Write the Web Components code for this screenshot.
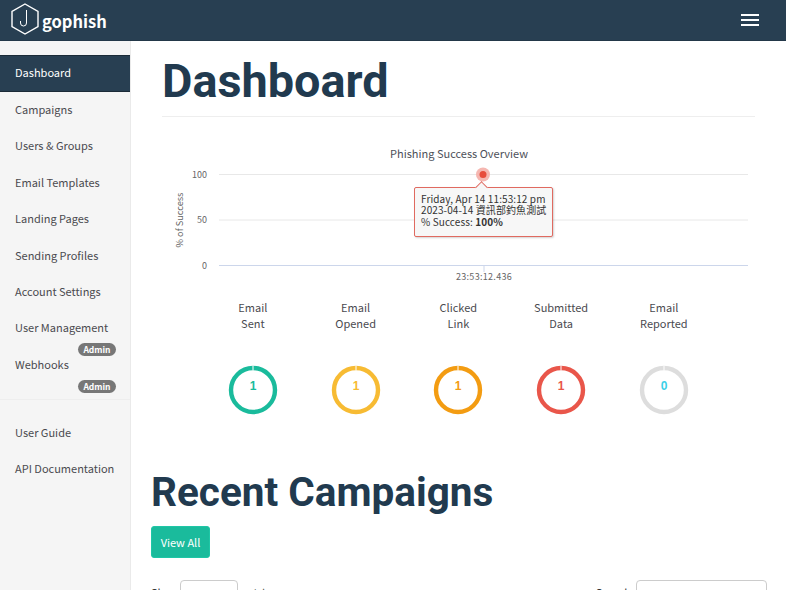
<!DOCTYPE html>
<html><head><meta charset="utf-8">
<style>
html,body{margin:0;padding:0;height:590px;overflow:hidden;background:#fff}
body{font-family:"Noto Sans CJK TC","Noto Sans",sans-serif;color:#333}
</style></head><body>
<gp-app></gp-app>
<script>
const def=(name,html)=>{customElements.define(name,class extends HTMLElement{
 connectedCallback(){ if(this.shadowRoot)return; const s=this.attachShadow({mode:'open'}); s.innerHTML=typeof html==='function'?html(this):html; }
});};
def('gp-topbar',`<style>
:host{display:flex;align-items:center;justify-content:space-between;height:41px;box-sizing:border-box;background:#283f52;border-bottom:1px solid #233849;padding:0 27px 0 11px;flex:none}
.brand{display:flex;align-items:center;gap:3px;color:#fff;font:700 16.5px "Noto Sans CJK TC","Noto Sans",sans-serif;}
.brand span{position:relative;top:1px}
.burger{display:flex;flex-direction:column;gap:3px}.burger i{display:block;width:18px;height:2px;background:#fff}
svg{display:block;margin-top:-2px}
</style><div class="brand"><svg width="28" height="32" viewBox="0 0 28 32" fill="none" stroke="#fff"><path d="M14 1 27 8.5V23.5L14 31 1 23.5V8.5Z" stroke-width="1.4"/><path d="M15.5 7V20a3 3 0 0 1-6 0v-2" stroke-width="1"/></svg><span>gophish</span></div><div class="burger"><i></i><i></i><i></i></div>`);
def('gp-nav-item',h=>`<style>
:host{display:block;position:relative;height:36.4px;line-height:34px;padding-left:15px;font-size:11px;color:#4a4a4f;box-sizing:border-box;white-space:nowrap}
:host([active]){background:#283f52;color:#fff;border-top:1px solid #1b2b38;border-bottom:1px solid #1b2b38;height:37px;line-height:33px}
.b{position:absolute;right:14px;top:33px;height:13px;width:38px;border-radius:7px;background:#777;color:#fff;font-size:8.5px;font-weight:700;line-height:13px;text-align:center}
</style><slot></slot>${h.hasAttribute('admin')?'<span class="b">Admin</span>':''}`);
def('gp-sidebar',`<style>
:host{display:block;width:131px;flex:none;box-sizing:border-box;background:#f5f5f5;border-right:1px solid #eaeaea;padding-top:14px}
.sep{height:1px;background:#eee;margin:15.5px 0 15px}
</style><slot name="top"></slot><div class="sep"></div><slot name="bottom"></slot>`);
def('gp-chart',`<style>
:host{display:block;position:relative;height:150px;margin-left:31px}
svg{display:block;position:absolute;left:0;top:0;overflow:visible}
text{font-family:"Noto Sans CJK TC","Noto Sans",sans-serif}
.tip{position:absolute;left:252px;top:70px;width:139px;height:50px;box-sizing:border-box;border:1px solid #e06a60;border-radius:2px;background:#f7f7f7;box-shadow:1px 1px 2px rgba(0,0,0,.18);padding:5px 6px 0;font-size:10px;line-height:11.4px;color:#333;white-space:nowrap;letter-spacing:.1px}
.tip::before{content:"";position:absolute;left:62px;top:-5px;width:8px;height:8px;background:#f7f7f7;border-left:1px solid #e06a60;border-top:1px solid #e06a60;transform:rotate(45deg)}
.tip b{font-weight:700}
</style>
<svg width="600" height="170" viewBox="0 0 600 170">
<text x="297" y="41" text-anchor="middle" font-size="11" fill="#4d5059">Phishing Success Overview</text>
<path d="M57 57.5H586M57 103H586" stroke="#e8e8e8"/><path d="M57 148.5H586" stroke="#ccd6eb"/>
<path d="M322 148.5V155" stroke="#ccd6eb"/>
<g font-size="9" fill="#666" text-anchor="end"><text x="45" y="61">100</text><text x="45" y="106">50</text><text x="45" y="152">0</text></g>
<text transform="translate(21 103) rotate(-90)" text-anchor="middle" font-size="9.2" fill="#666">% of Success</text>
<text x="322" y="163" text-anchor="middle" font-size="9" fill="#666" letter-spacing=".3">23:53:12.436</text>
<circle cx="321" cy="57.5" r="7" fill="#f5b7b1"/><circle cx="321" cy="57.5" r="3.5" fill="#e74c3c"/>
</svg>
<div class="tip">Friday, Apr 14 11:53:12 pm<br>2023-04-14 資訊部釣魚測試<br>% Success: <b>100%</b></div>`);
def('gp-stat',h=>{const c=h.getAttribute('color'),t=h.getAttribute('text')||c,v=h.getAttribute('value');return `<style>
:host{display:flex;flex-direction:column;align-items:center;width:102.75px;font-size:11px;color:#4a4a4f;text-align:center;line-height:16px}
.l{height:32px}svg{display:block;margin-top:34px}
text{font:700 12px "Liberation Sans",Arial,sans-serif}
</style><div class="l"><slot></slot></div>
<svg width="50" height="50" viewBox="0 0 50 50"><circle cx="25" cy="25" r="22" fill="none" stroke="${c}" stroke-width="4.4"/><path d="M25 0.5V5.5" stroke="#fff" stroke-width="1"/><text x="25" y="25" text-anchor="middle" fill="${t}">${v}</text></svg>`});
def('gp-button',`<style>
:host{display:inline-block;background:#1abb9c;border:1px solid #1fc6a6;border-radius:3px;color:#fff;font-size:11px;height:32px;line-height:30px;width:59px;text-align:center;box-sizing:border-box}
</style><slot></slot>`);
def('gp-input',`<style>
:host{display:inline-block;box-sizing:border-box;border:1px solid #ccc;border-radius:4px;background:#fff;height:28px;vertical-align:top}
</style>`);
def('gp-dashboard',`<style>
:host{display:block;flex:1;min-width:0;box-sizing:border-box;overflow:hidden}
h1{margin:0;color:#213a4f;font-family:Roboto,sans-serif;font-weight:700}
.head{margin:0 31px;}
.head h1{font-size:46.8px;line-height:56px;padding-top:12px;padding-bottom:7px;border-bottom:1px solid #eee;}
.stats{display:flex;margin-left:70.5px;margin-top:32px}
.recent{margin:0 19px 0 20px}
.recent h1{font-size:40.5px;line-height:48px;margin-top:53px}
gp-button{margin-top:10px;display:block}
.dt{display:flex;justify-content:space-between;align-items:flex-start;margin-top:22px;font-size:11px;line-height:24px;color:#333;height:40px}
.dt div{display:flex}
.l span:last-child{margin-left:3px}
.r span{margin-right:2px}
.l gp-input{width:58px}.r gp-input{width:131px}
</style>
<div class="head"><h1>Dashboard</h1></div>
<gp-chart></gp-chart>
<div class="stats">
<gp-stat color="#1abb9c" value="1">Email<br>Sent</gp-stat>
<gp-stat color="#f7bb33" value="1">Email<br>Opened</gp-stat>
<gp-stat color="#f39c12" value="1">Clicked<br>Link</gp-stat>
<gp-stat color="#e9564a" value="1">Submitted<br>Data</gp-stat>
<gp-stat color="#dddddd" text="#3bd0e8" value="0">Email<br>Reported</gp-stat>
</div>
<div class="recent"><h1>Recent Campaigns</h1><gp-button>View All</gp-button>
<div class="dt"><div class="l"><span>Show</span><gp-input></gp-input><span>entries</span></div><div class="r"><span>Search:</span><gp-input></gp-input></div></div></div>`);
def('gp-app',`<style>
:host{display:flex;flex-direction:column;height:590px;overflow:hidden}
.body{display:flex;flex:1;min-height:0}
</style><gp-topbar></gp-topbar><div class="body"><gp-sidebar>
<gp-nav-item slot="top" active>Dashboard</gp-nav-item>
<gp-nav-item slot="top">Campaigns</gp-nav-item>
<gp-nav-item slot="top">Users &amp; Groups</gp-nav-item>
<gp-nav-item slot="top">Email Templates</gp-nav-item>
<gp-nav-item slot="top">Landing Pages</gp-nav-item>
<gp-nav-item slot="top">Sending Profiles</gp-nav-item>
<gp-nav-item slot="top">Account Settings</gp-nav-item>
<gp-nav-item slot="top" admin>User Management</gp-nav-item>
<gp-nav-item slot="top" admin>Webhooks</gp-nav-item>
<gp-nav-item slot="bottom">User Guide</gp-nav-item>
<gp-nav-item slot="bottom">API Documentation</gp-nav-item>
</gp-sidebar><gp-dashboard></gp-dashboard></div>`);
</script></body></html>
